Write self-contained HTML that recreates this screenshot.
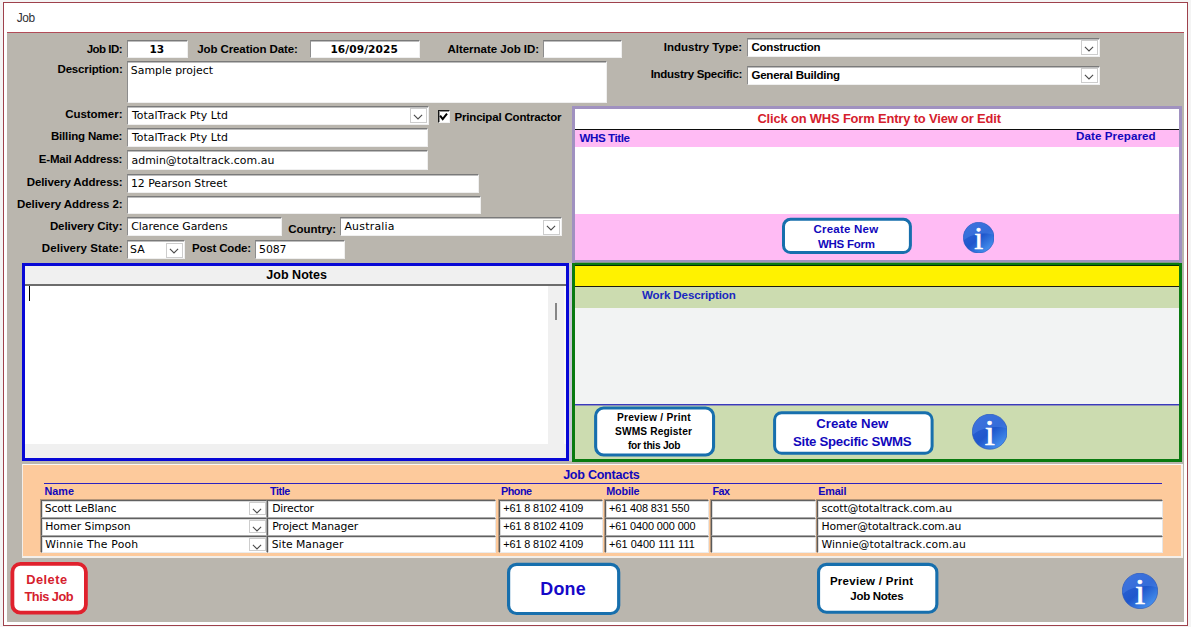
<!DOCTYPE html>
<html>
<head>
<meta charset="utf-8">
<title>Job</title>
<style>
html,body{margin:0;padding:0}
body{width:1191px;height:627px;position:relative;overflow:hidden;background:#f4f4f4;font-family:"Liberation Sans","DejaVu Sans",sans-serif}
*{box-sizing:border-box}
div,svg,span.t{position:absolute}
.t{white-space:nowrap;display:block}
#win{left:3px;top:2px;width:1185px;height:624px;border:1px solid #9e414c;background:#fff}
#form{left:7px;top:32px;width:1177px;height:590px;background:#bab6ae;border-top:1px solid #b24c58}
.f{background:#fff;border-top:1px solid #7a7a7a;border-left:1px solid #8c8c8c;border-right:1px solid #efefef;border-bottom:1px solid #efefef;box-shadow:inset 0 1px 0 #bdbdbd}
.c{background:#fff;border-top:1px solid #606060;border-left:1px solid #5a5a5a;border-right:1px solid #e6e6e6;border-bottom:1px solid #ececec;box-shadow:-1px -1px 0 rgba(70,70,70,.4),inset 1px 1px 0 #dadada}
.dd{background:#fff;border:1px solid #cdcdcd}
</style>
</head>
<body>
<div id="win"></div><div id="form"></div>
<div class="f" style="left:127px;top:40px;width:61px;height:18px"></div>
<div class="f" style="left:310px;top:40px;width:110px;height:18px"></div>
<div class="f" style="left:543px;top:40px;width:79px;height:18px"></div>
<div class="f" style="left:127px;top:61px;width:480px;height:42px"></div>
<div class="f" style="left:127px;top:106px;width:302px;height:19px"></div>
<div class="dd" style="left:410px;top:108px;width:17px;height:15px"></div><svg style="left:413px;top:113.6px" width="10" height="6" viewBox="0 0 10 6"><path d="M0.9 0.9 L5 5 L9.1 0.9" fill="none" stroke="#4a4a4a" stroke-width="1.1"/></svg>
<div class="f" style="left:127px;top:128px;width:301px;height:19px"></div>
<div class="f" style="left:127px;top:150px;width:301px;height:20px"></div>
<div class="f" style="left:127px;top:174px;width:352px;height:19px"></div>
<div class="f" style="left:127px;top:196px;width:354px;height:18px"></div>
<div class="f" style="left:127px;top:217px;width:155px;height:19px"></div>
<div class="f" style="left:340px;top:217px;width:222px;height:19px"></div>
<div class="dd" style="left:543px;top:220px;width:17px;height:15px"></div><svg style="left:546.2px;top:225px" width="10" height="6" viewBox="0 0 10 6"><path d="M0.9 0.9 L5 5 L9.1 0.9" fill="none" stroke="#4a4a4a" stroke-width="1.1"/></svg>
<div class="f" style="left:127px;top:240px;width:58px;height:19px"></div>
<div class="dd" style="left:166px;top:243px;width:17px;height:15px"></div><svg style="left:169.3px;top:247.5px" width="10" height="6" viewBox="0 0 10 6"><path d="M0.9 0.9 L5 5 L9.1 0.9" fill="none" stroke="#4a4a4a" stroke-width="1.1"/></svg>
<div class="f" style="left:255px;top:240px;width:90px;height:19px"></div>
<div class="f" style="left:747px;top:38px;width:353px;height:19px"></div>
<div class="dd" style="left:1081px;top:40px;width:17px;height:15px"></div><svg style="left:1084px;top:45.5px" width="10" height="6" viewBox="0 0 10 6"><path d="M0.9 0.9 L5 5 L9.1 0.9" fill="none" stroke="#4a4a4a" stroke-width="1.1"/></svg>
<div class="f" style="left:747px;top:66px;width:353px;height:19px"></div>
<div class="dd" style="left:1081px;top:68px;width:17px;height:15px"></div><svg style="left:1084px;top:73.7px" width="10" height="6" viewBox="0 0 10 6"><path d="M0.9 0.9 L5 5 L9.1 0.9" fill="none" stroke="#4a4a4a" stroke-width="1.1"/></svg>
<div style="left:438px;top:110px;width:12px;height:13px;background:#fff;border-top:1px solid #161616;border-left:1px solid #161616;border-right:1px solid #f2f2f2;border-bottom:1px solid #f2f2f2;box-shadow:inset 1px 1px 0 rgba(0,0,0,.42)"></div>
<svg style="left:439.3px;top:112.1px" width="10" height="10" viewBox="0 0 10 10"><path d="M1.1 3.7 L3.7 7.1 L8 1.6" fill="none" stroke="#000" stroke-width="2"/></svg>
<div style="left:572px;top:106px;width:610px;height:157px;background:#fff;border:3px solid #a091c0"></div>
<div style="left:575px;top:262px;width:604px;height:1px;background:#84998a"></div>
<div style="left:575px;top:129px;width:604px;height:1px;background:#0c0c0c"></div>
<div style="left:575px;top:130px;width:604px;height:17px;background:#ffbbf4"></div>
<div style="left:575px;top:214px;width:604px;height:46px;background:#ffbbf4"></div>
<div style="left:572px;top:263px;width:610px;height:199px;background:#ccdcb0;border:3px solid #0a7a10"></div>
<div style="left:575px;top:266px;width:604px;height:20px;background:#fff200"></div>
<div style="left:575px;top:286px;width:604px;height:1px;background:#1c1c10"></div>
<div style="left:575px;top:308px;width:604px;height:97px;background:#f2f3f3"></div>
<div style="left:575px;top:404px;width:604px;height:2px;background:#3a3abc;border-bottom:1px solid #8f92b8"></div>
<div style="left:575px;top:265px;width:604px;height:1px;background:#062a06"></div>
<div style="left:569px;top:263px;width:3px;height:198px;background:#cbc8d6"></div>
<div style="left:22px;top:263px;width:547px;height:198px;background:#f0f0f0;border:3px solid #0808d6"></div>
<div style="left:25px;top:284px;width:541px;height:2px;background:#6c6c6c"></div>
<div style="left:25px;top:286px;width:523px;height:158px;background:#fff"></div>
<div style="left:564px;top:286px;width:2px;height:158px;background:#f9f9f9"></div>
<div style="left:29px;top:286px;width:1px;height:15px;background:#000"></div>
<div style="left:555px;top:303px;width:2px;height:17px;background:#868686"></div>
<div style="left:22px;top:464px;width:1161px;height:94px;background:#fdca9c;border:1px solid #f3eee8;border-right:2px solid #f6f3ef;border-top:1px solid #fbfaf8;border-bottom:2px solid #f3efea"></div>
<div style="left:44px;top:483px;width:1118px;height:1px;background:#2a22c0"></div>
<div class="c" style="left:41px;top:500px;width:226px;height:18px"></div>
<div class="c" style="left:267px;top:500px;width:229px;height:18px"></div>
<div class="c" style="left:499px;top:500px;width:104px;height:18px"></div>
<div class="c" style="left:605px;top:500px;width:104px;height:18px"></div>
<div class="c" style="left:711px;top:500px;width:105px;height:18px"></div>
<div class="c" style="left:817px;top:500px;width:346px;height:18px"></div>
<div class="dd" style="left:249px;top:502px;width:17px;height:13px"></div><svg style="left:252.10000000000002px;top:507.8px" width="10" height="6" viewBox="0 0 10 6"><path d="M0.9 0.9 L5 5 L9.1 0.9" fill="none" stroke="#4a4a4a" stroke-width="1.1"/></svg>
<div class="c" style="left:41px;top:518px;width:226px;height:18px"></div>
<div class="c" style="left:267px;top:518px;width:229px;height:18px"></div>
<div class="c" style="left:499px;top:518px;width:104px;height:18px"></div>
<div class="c" style="left:605px;top:518px;width:104px;height:18px"></div>
<div class="c" style="left:711px;top:518px;width:105px;height:18px"></div>
<div class="c" style="left:817px;top:518px;width:346px;height:18px"></div>
<div class="dd" style="left:249px;top:520px;width:17px;height:13px"></div><svg style="left:252.10000000000002px;top:525.8px" width="10" height="6" viewBox="0 0 10 6"><path d="M0.9 0.9 L5 5 L9.1 0.9" fill="none" stroke="#4a4a4a" stroke-width="1.1"/></svg>
<div class="c" style="left:41px;top:536px;width:226px;height:17px"></div>
<div class="c" style="left:267px;top:536px;width:229px;height:17px"></div>
<div class="c" style="left:499px;top:536px;width:104px;height:17px"></div>
<div class="c" style="left:605px;top:536px;width:104px;height:17px"></div>
<div class="c" style="left:711px;top:536px;width:105px;height:17px"></div>
<div class="c" style="left:817px;top:536px;width:346px;height:17px"></div>
<div class="dd" style="left:249px;top:538px;width:17px;height:13px"></div><svg style="left:252.10000000000002px;top:543.8px" width="10" height="6" viewBox="0 0 10 6"><path d="M0.9 0.9 L5 5 L9.1 0.9" fill="none" stroke="#4a4a4a" stroke-width="1.1"/></svg>
<svg style="left:0;top:0" width="1191" height="627" viewBox="0 0 1191 627"><rect x="783.50" y="219.30" width="126.90" height="33.30" rx="7" fill="#fff" stroke="#176fad" stroke-width="3"/><rect x="595.65" y="407.95" width="117.90" height="47.10" rx="8" fill="#fff" stroke="#176fad" stroke-width="3.1"/><rect x="774.60" y="412.70" width="157.50" height="40.60" rx="7" fill="#fff" stroke="#176fad" stroke-width="3"/><rect x="12.40" y="563.90" width="73.50" height="48.80" rx="8" fill="#fff" stroke="#e0212d" stroke-width="3.8"/><rect x="508.60" y="564.40" width="110.10" height="49.10" rx="8" fill="#fff" stroke="#176fad" stroke-width="3.2"/><rect x="818.55" y="564.35" width="118.30" height="47.90" rx="8" fill="#fff" stroke="#176fad" stroke-width="3.1"/></svg>
<svg style="left:963px;top:221.7px" width="31.4" height="31.4" viewBox="0 0 36 36"><defs><linearGradient id="g1" x1="0.15" y1="0.1" x2="0.85" y2="0.95"><stop offset="0" stop-color="#2d63d4"/><stop offset="0.5" stop-color="#1f57cc"/><stop offset="1" stop-color="#4a98f2"/></linearGradient></defs><circle cx="18" cy="18" r="17.7" fill="url(#g1)" stroke="#2452b8" stroke-width="0.6"/><path d="M0.9 21 A17.3 17.3 0 0 1 35 14.5 C25 11.5 10 13 0.9 21 Z" fill="#4c82e6" opacity="0.5"/><text x="18" y="30.9" text-anchor="middle" font-family="Liberation Serif, serif" font-size="36.5" fill="#fff" stroke="#fff" stroke-width="0.7">i</text></svg>
<svg style="left:971.8px;top:414.2px" width="35.6" height="35.6" viewBox="0 0 36 36"><defs><linearGradient id="g2" x1="0.15" y1="0.1" x2="0.85" y2="0.95"><stop offset="0" stop-color="#2d63d4"/><stop offset="0.5" stop-color="#1f57cc"/><stop offset="1" stop-color="#4a98f2"/></linearGradient></defs><circle cx="18" cy="18" r="17.7" fill="url(#g2)" stroke="#2452b8" stroke-width="0.6"/><path d="M0.9 21 A17.3 17.3 0 0 1 35 14.5 C25 11.5 10 13 0.9 21 Z" fill="#4c82e6" opacity="0.5"/><text x="18" y="30.9" text-anchor="middle" font-family="Liberation Serif, serif" font-size="36.5" fill="#fff" stroke="#fff" stroke-width="0.7">i</text></svg>
<svg style="left:1122.2px;top:572.7px" width="36" height="36" viewBox="0 0 36 36"><defs><linearGradient id="g3" x1="0.15" y1="0.1" x2="0.85" y2="0.95"><stop offset="0" stop-color="#2d63d4"/><stop offset="0.5" stop-color="#1f57cc"/><stop offset="1" stop-color="#4a98f2"/></linearGradient></defs><circle cx="18" cy="18" r="17.7" fill="url(#g3)" stroke="#2452b8" stroke-width="0.6"/><path d="M0.9 21 A17.3 17.3 0 0 1 35 14.5 C25 11.5 10 13 0.9 21 Z" fill="#4c82e6" opacity="0.5"/><text x="18" y="30.9" text-anchor="middle" font-family="Liberation Serif, serif" font-size="36.5" fill="#fff" stroke="#fff" stroke-width="0.7">i</text></svg>
<!-- text -->
<span class="t" style="left:16.70px;top:12.70px;font:11.9px/1 'Liberation Sans','DejaVu Sans',sans-serif;color:#303034;letter-spacing:-0.413px">Job</span>
<span class="t" style="left:86.70px;top:44.00px;font:700 11.5px/1 'Liberation Sans','DejaVu Sans',sans-serif;color:#000;letter-spacing:-0.500px">Job ID:</span>
<span class="t" style="left:197.21px;top:44.10px;font:700 11.5px/1 'Liberation Sans','DejaVu Sans',sans-serif;color:#000;letter-spacing:-0.094px">Job Creation Date:</span>
<span class="t" style="left:447.48px;top:44.10px;font:700 11.5px/1 'Liberation Sans','DejaVu Sans',sans-serif;color:#000;letter-spacing:-0.024px">Alternate Job ID:</span>
<span class="t" style="left:57.50px;top:63.50px;font:700 11.5px/1 'Liberation Sans','DejaVu Sans',sans-serif;color:#000;letter-spacing:-0.164px">Description:</span>
<span class="t" style="left:65.14px;top:109.10px;font:700 11.5px/1 'Liberation Sans','DejaVu Sans',sans-serif;color:#000;letter-spacing:-0.020px">Customer:</span>
<span class="t" style="left:50.90px;top:131.30px;font:700 11.5px/1 'Liberation Sans','DejaVu Sans',sans-serif;color:#000;letter-spacing:-0.160px">Billing Name:</span>
<span class="t" style="left:38.80px;top:153.90px;font:700 11.5px/1 'Liberation Sans','DejaVu Sans',sans-serif;color:#000;letter-spacing:-0.202px">E-Mail Address:</span>
<span class="t" style="left:26.70px;top:177.00px;font:700 11.5px/1 'Liberation Sans','DejaVu Sans',sans-serif;color:#000;letter-spacing:-0.093px">Delivery Address:</span>
<span class="t" style="left:17.00px;top:199.20px;font:700 11.5px/1 'Liberation Sans','DejaVu Sans',sans-serif;color:#000;letter-spacing:-0.078px">Delivery Address 2:</span>
<span class="t" style="left:49.90px;top:220.50px;font:700 11.5px/1 'Liberation Sans','DejaVu Sans',sans-serif;color:#000;letter-spacing:-0.071px">Delivery City:</span>
<span class="t" style="left:41.80px;top:243.30px;font:700 11.5px/1 'Liberation Sans','DejaVu Sans',sans-serif;color:#000;letter-spacing:0.067px">Delivery State:</span>
<span class="t" style="left:288.24px;top:224.30px;font:700 11.5px/1 'Liberation Sans','DejaVu Sans',sans-serif;color:#000;letter-spacing:-0.001px">Country:</span>
<span class="t" style="left:192.00px;top:243.30px;font:700 11.5px/1 'Liberation Sans','DejaVu Sans',sans-serif;color:#000;letter-spacing:-0.180px">Post Code:</span>
<span class="t" style="left:454.50px;top:111.80px;font:700 11.5px/1 'Liberation Sans','DejaVu Sans',sans-serif;color:#000;letter-spacing:-0.182px">Principal Contractor</span>
<span class="t" style="left:663.80px;top:41.50px;font:700 11.5px/1 'Liberation Sans','DejaVu Sans',sans-serif;color:#000;letter-spacing:0.001px">Industry Type:</span>
<span class="t" style="left:650.70px;top:69.40px;font:700 11.5px/1 'Liberation Sans','DejaVu Sans',sans-serif;color:#000;letter-spacing:-0.284px">Industry Specific:</span>
<span class="t" style="left:149.50px;top:43.80px;font:700 10.6px/1 'DejaVu Sans','Liberation Sans',sans-serif;color:#000;letter-spacing:-0.000px">13</span>
<span class="t" style="left:330.41px;top:44.00px;font:700 10.6px/1 'DejaVu Sans','Liberation Sans',sans-serif;color:#000;letter-spacing:0.081px">16/09/2025</span>
<span class="t" style="left:130.86px;top:65.90px;font:10.9px/1 'DejaVu Sans','Liberation Sans',sans-serif;color:#000;letter-spacing:-0.004px">Sample project</span>
<span class="t" style="left:131.90px;top:111.10px;font:10.9px/1 'DejaVu Sans','Liberation Sans',sans-serif;color:#000;letter-spacing:0.043px">TotalTrack Pty Ltd</span>
<span class="t" style="left:131.90px;top:133.30px;font:10.9px/1 'DejaVu Sans','Liberation Sans',sans-serif;color:#000;letter-spacing:0.043px">TotalTrack Pty Ltd</span>
<span class="t" style="left:131.42px;top:155.50px;font:10.9px/1 'DejaVu Sans','Liberation Sans',sans-serif;color:#000;letter-spacing:0.069px">admin@totaltrack.com.au</span>
<span class="t" style="left:131.00px;top:178.70px;font:10.9px/1 'DejaVu Sans','Liberation Sans',sans-serif;color:#000;letter-spacing:-0.062px">12 Pearson Street</span>
<span class="t" style="left:131.29px;top:222.20px;font:10.9px/1 'DejaVu Sans','Liberation Sans',sans-serif;color:#000;letter-spacing:-0.038px">Clarence Gardens</span>
<span class="t" style="left:344.44px;top:222.20px;font:10.9px/1 'DejaVu Sans','Liberation Sans',sans-serif;color:#000;letter-spacing:0.236px">Australia</span>
<span class="t" style="left:130.06px;top:245.00px;font:10.9px/1 'DejaVu Sans','Liberation Sans',sans-serif;color:#000;letter-spacing:-0.000px">SA</span>
<span class="t" style="left:259.10px;top:245.00px;font:10.9px/1 'DejaVu Sans','Liberation Sans',sans-serif;color:#000;letter-spacing:-0.087px">5087</span>
<span class="t" style="left:751.44px;top:42.10px;font:700 11.5px/1 'Liberation Sans','DejaVu Sans',sans-serif;color:#000;letter-spacing:-0.217px">Construction</span>
<span class="t" style="left:751.44px;top:70.00px;font:700 11.5px/1 'Liberation Sans','DejaVu Sans',sans-serif;color:#000;letter-spacing:-0.222px">General Building</span>
<span class="t" style="left:757.39px;top:112.70px;font:700 12.9px/1 'Liberation Sans','DejaVu Sans',sans-serif;color:#d5202d;letter-spacing:-0.143px">Click on WHS Form Entry to View or Edit</span>
<span class="t" style="left:579.40px;top:132.20px;font:700 11.6px/1 'Liberation Sans','DejaVu Sans',sans-serif;color:#1208bc;letter-spacing:-0.402px">WHS Title</span>
<span class="t" style="left:1076.00px;top:130.20px;font:700 11.6px/1 'Liberation Sans','DejaVu Sans',sans-serif;color:#1208bc;letter-spacing:0.090px">Date Prepared</span>
<span class="t" style="left:813.44px;top:223.90px;font:700 11.5px/1 'Liberation Sans','DejaVu Sans',sans-serif;color:#1208bc;letter-spacing:0.222px">Create New</span>
<span class="t" style="left:818.00px;top:238.50px;font:700 11.5px/1 'Liberation Sans','DejaVu Sans',sans-serif;color:#1208bc;letter-spacing:-0.271px">WHS Form</span>
<span class="t" style="left:642.00px;top:288.90px;font:700 11.6px/1 'Liberation Sans','DejaVu Sans',sans-serif;color:#1a28c0;letter-spacing:-0.125px">Work Description</span>
<span class="t" style="left:616.95px;top:412.70px;font:700 10.2px/1 'Liberation Sans','DejaVu Sans',sans-serif;color:#000;letter-spacing:0.253px">Preview / Print</span>
<span class="t" style="left:615.08px;top:426.90px;font:700 10.2px/1 'Liberation Sans','DejaVu Sans',sans-serif;color:#000;letter-spacing:0.127px">SWMS Register</span>
<span class="t" style="left:627.97px;top:440.50px;font:700 10.2px/1 'Liberation Sans','DejaVu Sans',sans-serif;color:#000;letter-spacing:-0.270px">for this Job</span>
<span class="t" style="left:816.26px;top:417.20px;font:700 13.2px/1 'Liberation Sans','DejaVu Sans',sans-serif;color:#1208bc;letter-spacing:0.023px">Create New</span>
<span class="t" style="left:793.00px;top:435.30px;font:700 13.2px/1 'Liberation Sans','DejaVu Sans',sans-serif;color:#1208bc;letter-spacing:-0.263px">Site Specific SWMS</span>
<span class="t" style="left:266.24px;top:268.60px;font:700 12.5px/1 'Liberation Sans','DejaVu Sans',sans-serif;color:#000;letter-spacing:0.046px">Job Notes</span>
<span class="t" style="left:563.14px;top:469.00px;font:700 12.6px/1 'Liberation Sans','DejaVu Sans',sans-serif;color:#1208bc;letter-spacing:-0.280px">Job Contacts</span>
<span class="t" style="left:44.52px;top:486.10px;font:700 10.8px/1 'Liberation Sans','DejaVu Sans',sans-serif;color:#1208bc;letter-spacing:-0.008px">Name</span>
<span class="t" style="left:270.10px;top:486.10px;font:700 10.8px/1 'Liberation Sans','DejaVu Sans',sans-serif;color:#1208bc;letter-spacing:-0.459px">Title</span>
<span class="t" style="left:501.02px;top:486.10px;font:700 10.8px/1 'Liberation Sans','DejaVu Sans',sans-serif;color:#1208bc;letter-spacing:-0.500px">Phone</span>
<span class="t" style="left:606.22px;top:486.10px;font:700 10.8px/1 'Liberation Sans','DejaVu Sans',sans-serif;color:#1208bc;letter-spacing:-0.158px">Mobile</span>
<span class="t" style="left:712.52px;top:486.10px;font:700 10.8px/1 'Liberation Sans','DejaVu Sans',sans-serif;color:#1208bc;letter-spacing:-0.500px">Fax</span>
<span class="t" style="left:818.32px;top:486.10px;font:700 10.8px/1 'Liberation Sans','DejaVu Sans',sans-serif;color:#1208bc;letter-spacing:-0.181px">Email</span>
<span class="t" style="left:44.75px;top:504.00px;font:10.8px/1 'DejaVu Sans','Liberation Sans',sans-serif;color:#000;letter-spacing:-0.163px">Scott LeBlanc</span>
<span class="t" style="left:272.14px;top:504.00px;font:10.8px/1 'DejaVu Sans','Liberation Sans',sans-serif;color:#000;letter-spacing:-0.219px">Director</span>
<span class="t" style="left:503.29px;top:503.00px;font:10.9px/1 'Liberation Sans','DejaVu Sans',sans-serif;color:#000;letter-spacing:-0.140px">+61 8 8102 4109</span>
<span class="t" style="left:608.99px;top:503.00px;font:10.9px/1 'Liberation Sans','DejaVu Sans',sans-serif;color:#000;letter-spacing:-0.106px">+61 408 831 550</span>
<span class="t" style="left:821.39px;top:504.00px;font:10.8px/1 'DejaVu Sans','Liberation Sans',sans-serif;color:#000;letter-spacing:-0.099px">scott@totaltrack.com.au</span>
<span class="t" style="left:45.14px;top:522.10px;font:10.8px/1 'DejaVu Sans','Liberation Sans',sans-serif;color:#000;letter-spacing:-0.048px">Homer Simpson</span>
<span class="t" style="left:272.14px;top:522.10px;font:10.8px/1 'DejaVu Sans','Liberation Sans',sans-serif;color:#000;letter-spacing:-0.122px">Project Manager</span>
<span class="t" style="left:503.29px;top:521.10px;font:10.9px/1 'Liberation Sans','DejaVu Sans',sans-serif;color:#000;letter-spacing:-0.140px">+61 8 8102 4109</span>
<span class="t" style="left:608.99px;top:521.10px;font:10.9px/1 'Liberation Sans','DejaVu Sans',sans-serif;color:#000;letter-spacing:-0.099px">+61 0400 000 000</span>
<span class="t" style="left:821.44px;top:522.10px;font:10.8px/1 'DejaVu Sans','Liberation Sans',sans-serif;color:#000;letter-spacing:-0.123px">Homer@totaltrack.com.au</span>
<span class="t" style="left:45.34px;top:540.00px;font:10.8px/1 'DejaVu Sans','Liberation Sans',sans-serif;color:#000;letter-spacing:0.209px">Winnie The Pooh</span>
<span class="t" style="left:271.75px;top:540.00px;font:10.8px/1 'DejaVu Sans','Liberation Sans',sans-serif;color:#000;letter-spacing:0.014px">Site Manager</span>
<span class="t" style="left:503.29px;top:539.00px;font:10.9px/1 'Liberation Sans','DejaVu Sans',sans-serif;color:#000;letter-spacing:-0.140px">+61 8 8102 4109</span>
<span class="t" style="left:608.99px;top:539.00px;font:10.9px/1 'Liberation Sans','DejaVu Sans',sans-serif;color:#000;letter-spacing:0.059px">+61 0400 111 111</span>
<span class="t" style="left:821.54px;top:540.00px;font:10.8px/1 'DejaVu Sans','Liberation Sans',sans-serif;color:#000;letter-spacing:0.051px">Winnie@totaltrack.com.au</span>
<span class="t" style="left:26.17px;top:573.90px;font:700 12.8px/1 'Liberation Sans','DejaVu Sans',sans-serif;color:#d5202d;letter-spacing:0.500px">Delete</span>
<span class="t" style="left:24.50px;top:591.30px;font:700 12.8px/1 'Liberation Sans','DejaVu Sans',sans-serif;color:#d5202d;letter-spacing:-0.500px">This Job</span>
<span class="t" style="left:540.22px;top:580.60px;font:700 17.9px/1 'Liberation Sans','DejaVu Sans',sans-serif;color:#1508c8;letter-spacing:0.260px">Done</span>
<span class="t" style="left:829.90px;top:575.80px;font:700 11.5px/1 'Liberation Sans','DejaVu Sans',sans-serif;color:#000;letter-spacing:0.279px">Preview / Print</span>
<span class="t" style="left:850.31px;top:590.80px;font:700 11.5px/1 'Liberation Sans','DejaVu Sans',sans-serif;color:#000;letter-spacing:-0.287px">Job Notes</span>
</body>
</html>
